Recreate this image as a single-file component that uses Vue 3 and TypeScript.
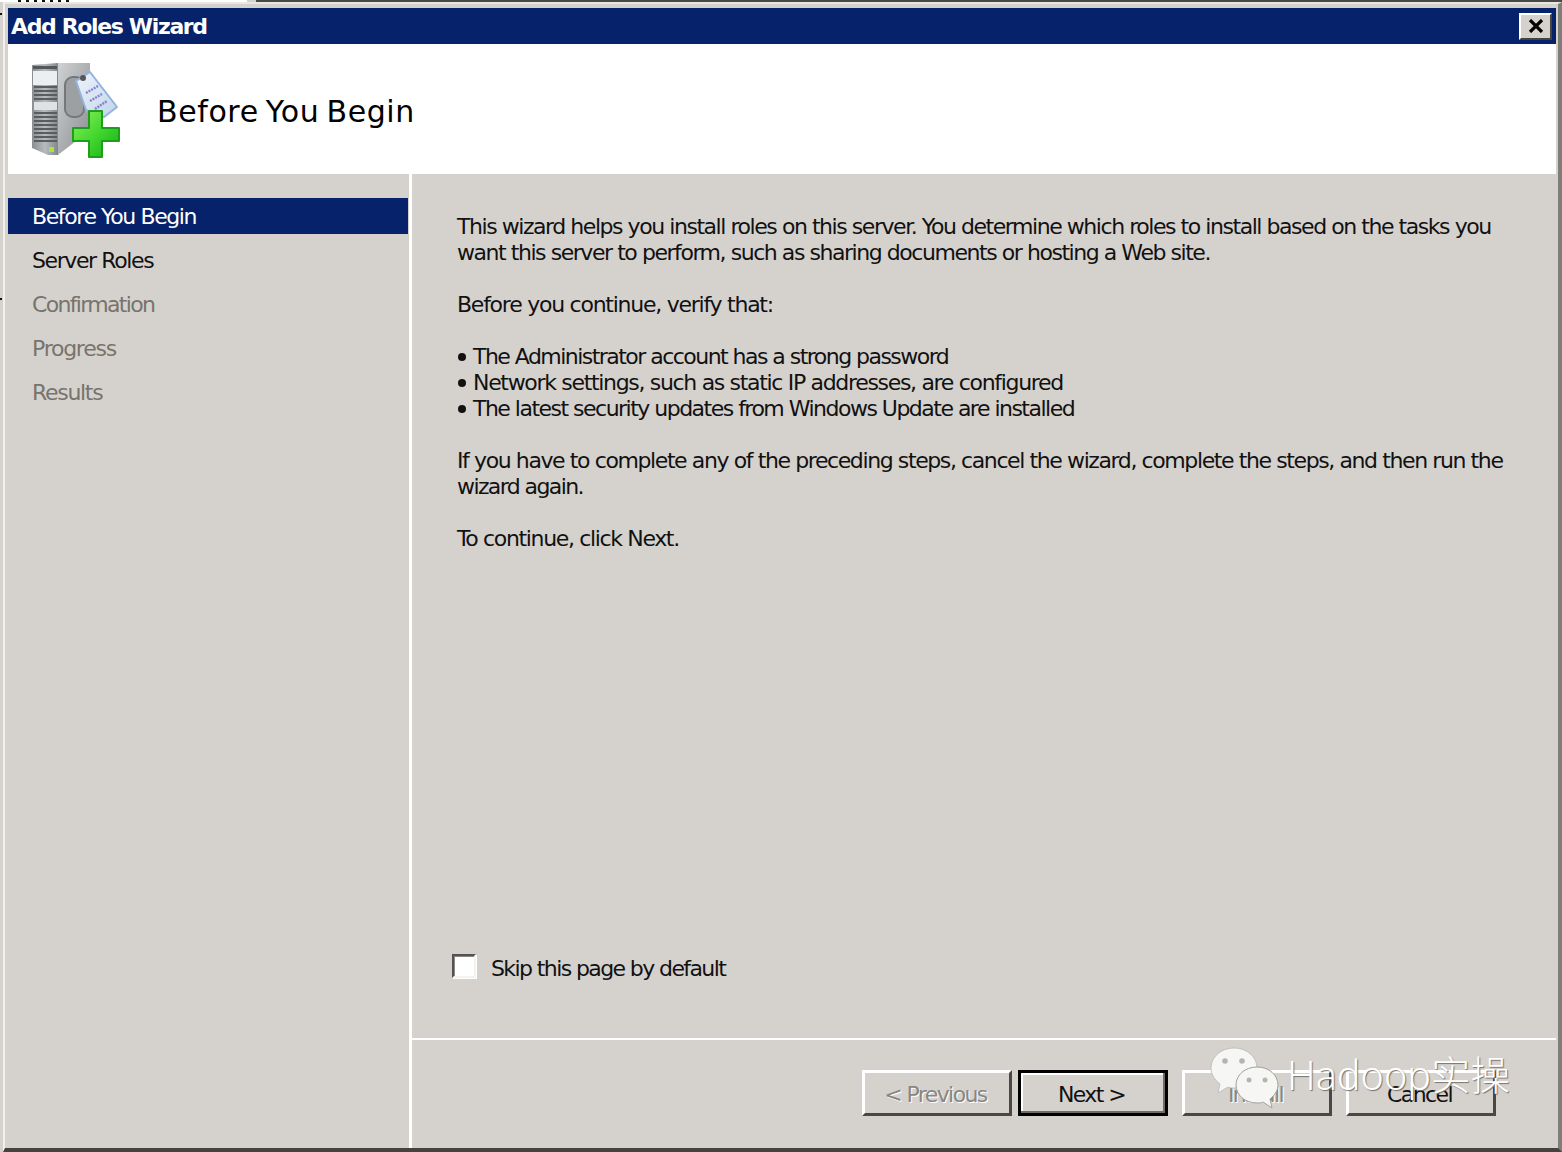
<script setup lang="ts">
const steps: { label: string; state: string }[] = [
  { label: 'Before You Begin', state: 'active' },
  { label: 'Server Roles', state: 'normal' },
  { label: 'Confirmation', state: 'off tight' },
  { label: 'Progress', state: 'off loose' },
  { label: 'Results', state: 'off' },
]
const bullets: { text: string; fit: string }[] = [
  { text: 'The Administrator account has a strong password', fit: 'fit-a' },
  { text: 'Network settings, such as static IP addresses, are configured', fit: 'fit-b' },
  { text: 'The latest security updates from Windows Update are installed', fit: 'fit-c' },
]
</script>

<template>
  <div class="screen">
    <div class="topstrip">
      <div class="strip-light"><span class="clipped"></span></div>
      <div class="strip-gap"></div>
      <div class="strip-dark"></div>
    </div>
    <div class="window">
      <div class="titlebar">
        <span class="title-text">Add Roles Wizard</span>
        <button class="close" type="button" aria-label="Close">
          <svg width="18" height="14" viewBox="0 0 18 14">
            <path d="M3 1 L15 13 M15 1 L3 13" stroke="#000" stroke-width="3.2" fill="none" />
          </svg>
        </button>
      </div>
      <header class="banner">
        <svg class="role-icon" width="92" height="100" viewBox="0 0 92 100">
          <defs>
            <linearGradient id="front" x1="0" y1="0" x2="1" y2="0">
              <stop offset="0" stop-color="#8b8e91" />
              <stop offset="0.5" stop-color="#b8babc" />
              <stop offset="1" stop-color="#83868a" />
            </linearGradient>
            <linearGradient id="side" x1="0" y1="0" x2="1" y2="1">
              <stop offset="0" stop-color="#cfd1d3" />
              <stop offset="1" stop-color="#8a8d90" />
            </linearGradient>
            <linearGradient id="tag" x1="0" y1="0" x2="1" y2="1">
              <stop offset="0" stop-color="#eef3fa" />
              <stop offset="1" stop-color="#c2d5ec" />
            </linearGradient>
            <linearGradient id="plus" x1="0" y1="0" x2="1" y2="1">
              <stop offset="0" stop-color="#8cf05a" />
              <stop offset="0.55" stop-color="#3fd42c" />
              <stop offset="1" stop-color="#12ae14" />
            </linearGradient>
          </defs>
          <path d="M2 5 L28 3 L28 95 L18 95 L2 88 Z" fill="url(#front)" />
          <path d="M28 3 L60 3 L60 70 L28 95 Z" fill="url(#side)" />
          <rect x="3" y="6" width="24" height="3" fill="#55585b" />
          <rect x="3" y="11" width="24" height="14" fill="#eceef0" />
          <g fill="#5a5d60">
            <rect x="4" y="26" width="23" height="2" /><rect x="4" y="30" width="23" height="2" />
            <rect x="4" y="34" width="23" height="2" /><rect x="4" y="38" width="23" height="2" />
            <rect x="4" y="52" width="23" height="2" /><rect x="4" y="56" width="23" height="2" />
            <rect x="4" y="60" width="23" height="2" /><rect x="4" y="64" width="23" height="2" />
            <rect x="4" y="68" width="23" height="2" /><rect x="4" y="72" width="23" height="2" />
            <rect x="4" y="76" width="23" height="2" /><rect x="4" y="80" width="23" height="2" />
          </g>
          <rect x="4" y="42" width="23" height="8" fill="#dfe1e3" />
          <rect x="19" y="87" width="5" height="5" fill="#a6e63c" />
          <rect x="35" y="17" width="19" height="40" rx="8" fill="#9da0a3" stroke="#75787b" stroke-width="2" />
          <path d="M46 21 L60 12 L87 47 L74 57 L56 50 Z" fill="url(#tag)" stroke="#93b4dc" stroke-width="2" stroke-linejoin="round" />
          <circle cx="53" cy="18" r="3" fill="#55585b" />
          <path d="M56 33 L68 26 M60 41 L72 34 M65 49 L77 41" stroke="#8a80d0" stroke-width="2.5" stroke-dasharray="2 1" />
          <path d="M59 51 H72 V68 H89 V81 H72 V97 H59 V81 H43 V68 H59 Z" fill="url(#plus)" stroke="#1d9f1d" stroke-width="2" stroke-linejoin="round" />
        </svg>
        <h1 class="banner-title">Before You Begin</h1>
      </header>
      <div class="body">
        <nav class="steps">
          <div v-for="s in steps" :key="s.label" class="step" :class="s.state">{{ s.label }}</div>
        </nav>
        <main class="pane">
          <div class="content">
            <div class="copy">
              <p>This wizard helps you install roles on this server. You determine which roles to install based on the tasks you<br />want this server to perform, such as sharing documents or hosting a Web site.</p>
              <p class="fit-d">Before you continue, verify that:</p>
              <ul>
                <li v-for="b in bullets" :key="b.text" :class="b.fit">{{ b.text }}</li>
              </ul>
              <p><span class="fit-e">If you have to complete any of the preceding steps, cancel the wizard, complete the steps, and then run the</span><br /><span class="fit-f">wizard again.</span></p>
              <p class="fit-g">To continue, click Next.</p>
            </div>
            <label class="skip">
              <span class="box"></span>
              <span>Skip this page by default</span>
            </label>
          </div>
          <footer class="actions">
            <button class="btn off" type="button">&lt; Previous</button>
            <button class="btn default" type="button">Next &gt;</button>
            <button class="btn off install" type="button">Install</button>
            <button class="btn" type="button">Cancel</button>
          </footer>
        </main>
      </div>
    </div>
    <span class="tick tick-a"></span>
    <span class="tick tick-b"></span>
    <div class="watermark">
      <svg width="70" height="62" viewBox="0 0 70 62">
        <path d="M24 1 C11 1 1 10 1 21 C1 28 5 33 10 37 L8 46 L18 40 C20 41 22 41 24 41 C37 41 47 32 47 21 C47 10 37 1 24 1 Z" fill="#f6f6f4" stroke="#b8b8b4" stroke-width="0.8" />
        <path d="M47 20 C35 20 26 28 26 38 C26 48 35 56 47 56 C49 56 51 56 53 55 L62 61 L60 52 C65 48 68 43 68 38 C68 28 59 20 47 20 Z" fill="#f6f6f4" stroke="#a0a09c" stroke-width="1" />
        <circle cx="15" cy="14" r="2.8" fill="#b5b5b0" /><circle cx="32" cy="14" r="2.8" fill="#b5b5b0" />
        <circle cx="39" cy="33" r="2.5" fill="#b5b5b0" /><circle cx="55" cy="33" r="2.5" fill="#b5b5b0" />
      </svg>
      <span class="wm-text">Hadoop实操</span>
    </div>
  </div>
</template>

<style>
html, body { margin: 0; background: #d5d2ce; }
</style>

<style scoped>
.screen {
  position: relative;
  width: 1562px;
  height: 1152px;
  overflow: hidden;
  background: #d5d2ce;
  display: flex;
  flex-direction: column;
  font-family: "DejaVu Sans", "Noto Sans CJK SC", sans-serif;
  color: #111;
}
.topstrip { display: flex; height: 2px; flex: none; }
.strip-light { width: 247px; background: #fff; padding-left: 18px; box-sizing: border-box; }
.clipped {
  display: block;
  width: 54px;
  height: 2px;
  background: repeating-linear-gradient(90deg, #111 0 3px, #fff 3px 8px);
}
.strip-gap { width: 9px; background: #d5d2ce; }
.strip-dark { flex: 1; background: #4a4844; }
.tick { position: absolute; left: 0; width: 2px; height: 2px; background: #111; }
.tick-a { top: 13px; }
.tick-b { top: 298px; }
.window {
  flex: 1;
  min-height: 0;
  display: flex;
  flex-direction: column;
  margin-left: 3px;
  padding: 4px 2px 0 3px;
  border-top: 2px solid #e9e7e2;
  border-left: 2px solid #f2f1ee;
  border-bottom: 4px solid #45433f;
  border-right: 4px solid #807d78;
}
.titlebar {
  height: 36px;
  flex: none;
  background: #05226b;
  display: flex;
  align-items: center;
  justify-content: space-between;
  padding: 0 4px 0 3px;
}
.title-text {
  color: #fff;
  font-size: 22px;
  font-weight: 700;
  letter-spacing: -1.36px;
}
.close {
  width: 33px;
  height: 27px;
  padding: 0;
  background: #d5d2ce;
  border: 2px solid;
  border-color: #fff #45433f #45433f #fff;
  display: flex;
  align-items: center;
  justify-content: center;
}
.banner {
  height: 130px;
  flex: none;
  background: #fff;
  display: flex;
  align-items: center;
  padding-left: 22px;
  box-sizing: border-box;
}
.role-icon { flex: none; margin-top: 2px; }
.banner-title {
  margin: 0 0 0 35px;
  font-size: 30px;
  font-weight: 400;
  color: #000;
  letter-spacing: 0.6px;
  word-spacing: -3px;
  line-height: 1;
  position: relative;
  top: 3px;
}
.body { flex: 1; display: flex; min-height: 0; }
.steps {
  width: 400px;
  flex: none;
  padding-top: 24px;
  box-sizing: border-box;
  display: flex;
  flex-direction: column;
  gap: 8px;
}
.step {
  height: 36px;
  line-height: 38px;
  padding-left: 24px;
  font-size: 22px;
  letter-spacing: -1.4px;
  color: #111;
}
.step.active { background: #05226b; color: #fff; }
.step.off { color: #77746d; letter-spacing: -1.3px; }
.step.tight { letter-spacing: -1.67px; }
.step.loose { letter-spacing: -1.25px; }
.pane {
  flex: 1;
  min-width: 0;
  margin-left: 1px;
  border-left: 3px solid #fff;
  display: flex;
  flex-direction: column;
}
.content {
  flex: 1;
  min-height: 0;
  padding: 40px 0 0 45px;
  display: flex;
  flex-direction: column;
  justify-content: space-between;
}
.copy { font-size: 22px; letter-spacing: -1.45px; line-height: 26px; white-space: nowrap; }
.copy p { margin: 0 0 26px; }
.copy ul { margin: 0 0 26px; padding: 0; list-style: none; }
.copy li::before {
  content: "";
  display: inline-block;
  width: 8px;
  height: 8px;
  border-radius: 50%;
  background: #111;
  margin: 0 7px 2px 1px;
  vertical-align: middle;
}
.copy .fit-a { letter-spacing: -1.535px; }
.copy .fit-b { letter-spacing: -1.32px; }
.copy .fit-c { letter-spacing: -1.515px; }
.copy .fit-d { letter-spacing: -1.25px; }
.copy .fit-e { letter-spacing: -1.4px; }
.copy .fit-f { letter-spacing: -1.6px; }
.copy .fit-g { letter-spacing: -1.35px; }
.skip {
  display: flex;
  align-items: center;
  gap: 15px;
  font-size: 22px;
  letter-spacing: -1.6px;
  margin: 0 0 57px -5px;
}
.box {
  width: 20px;
  height: 20px;
  background: #fff;
  border: 2px solid;
  border-color: #55534f #f4f3f0 #f4f3f0 #55534f;
  box-shadow: inset 1px 1px 0 #8b8985, 1px 1px 0 #fff;
  position: relative;
  top: -3px;
}
.actions {
  flex: none;
  height: 110px;
  box-sizing: border-box;
  border-top: 2px solid #fff;
  display: flex;
  justify-content: flex-end;
  align-items: flex-start;
  padding: 30px 60px 0 0;
  gap: 6px;
}
.btn {
  width: 150px;
  height: 46px;
  padding: 2px 3px 0 0;
  background: #d5d2ce;
  border: 3px solid;
  border-color: #fff #4a4844 #4a4844 #fff;
  font: inherit;
  font-size: 22px;
  letter-spacing: -1.6px;
  color: #111;
  box-sizing: border-box;
}
.btn.off { color: #8a877f; text-shadow: 1px 1px 0 #fff; }
.btn.default { border-color: #000; box-shadow: inset -2px -2px 0 #6f6c66, inset 2px 2px 0 #fff; }
.btn.install { margin-left: 8px; margin-right: 8px; }
.watermark {
  position: absolute;
  left: 1210px;
  top: 1047px;
  display: flex;
  align-items: center;
  gap: 7px;
  pointer-events: none;
}
.wm-text {
  font-family: "Noto Sans", "Noto Sans CJK SC", sans-serif;
  font-weight: 300;
  font-size: 39.6px;
  line-height: 1;
  color: #fff;
  text-shadow: 1px 1px 1px #77746d;
  position: relative;
  top: -2px;
}
</style>
